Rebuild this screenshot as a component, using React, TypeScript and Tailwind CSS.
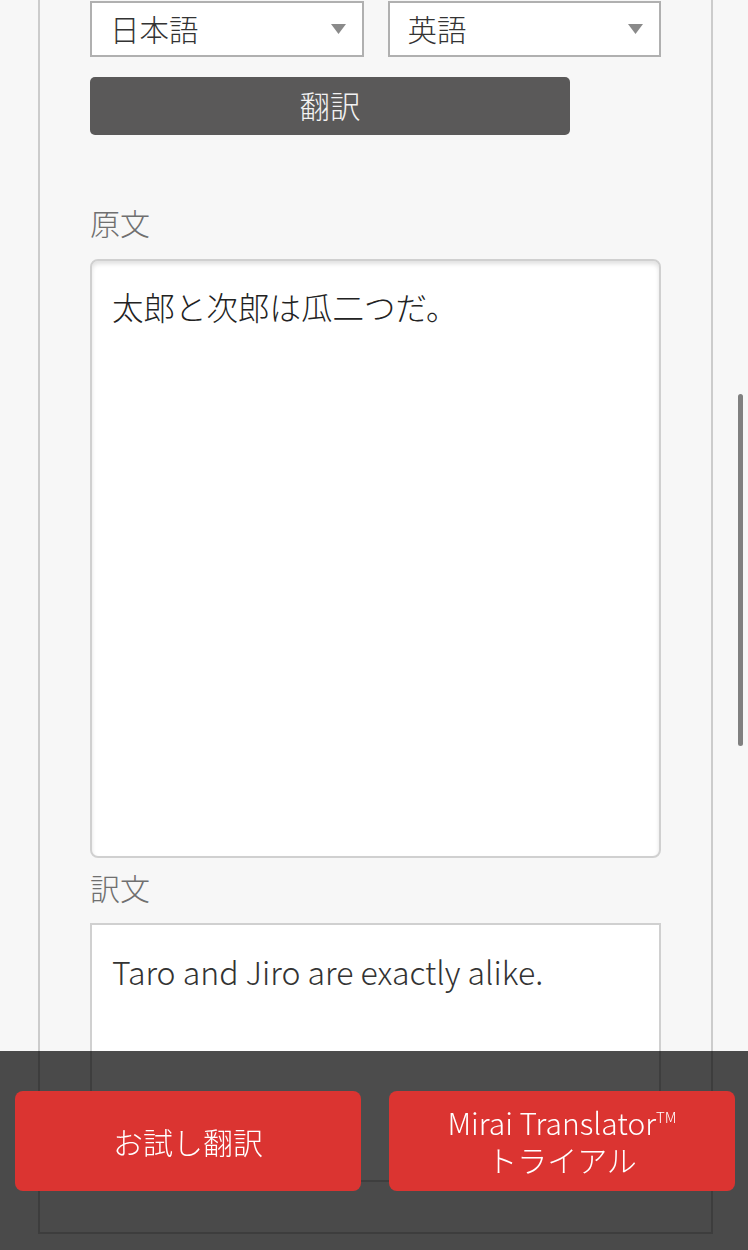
const font = "font-['Noto_Sans_CJK_JP_Light','Noto_Sans_CJK_JP_DemiLight','Noto_Sans_CJK_JP',sans-serif]";

function LangSelect({ label }: { label: string }) {
  return (
    <div className="flex h-[56px] flex-1 items-center justify-between border-2 border-[#b0b0b0] bg-white pl-[18px] pr-[16px]">
      <span className="text-[29.5px] font-light leading-none text-[#333]">{label}</span>
      <svg width="15" height="10" viewBox="0 0 15 10">
        <path d="M0 0h15L7.5 10z" fill="#8a8a8a" />
      </svg>
    </div>
  );
}

export default function App() {
  return (
    <div className={`min-h-screen bg-[#f7f7f7] pb-[16px] pl-[38px] pr-[35px] ${font}`}>
      <main className="flex flex-col border-x-2 border-b-2 border-[#cccccc] px-[50px] pb-[50px] pt-[1px]">
        <div className="flex gap-[24px]">
          <LangSelect label="日本語" />
          <LangSelect label="英語" />
        </div>

        <button className="mt-[20px] h-[58px] w-[480px] rounded-[5px] bg-[#5a5959] text-[30.5px] font-light text-[#f2f2f2]">
          翻訳
        </button>

        <h2 className="mt-[66px] text-[30px] font-light leading-[42px] text-[#6f6f6f]">原文</h2>
        <div className="mt-[16px] h-[599px] rounded-[8px] border-2 border-[#d0d0d0] bg-white px-[20px] pt-[23px] shadow-[inset_0_3px_4px_rgba(0,0,0,0.12)]">
          <p className="text-[31.5px] font-light leading-[44px] text-[#222]">太郎と次郎は瓜二つだ。</p>
        </div>

        <h2 className="mt-[8px] text-[30px] font-light leading-[42px] text-[#6f6f6f]">訳文</h2>
        <div className="mt-[15px] h-[259px] border-2 border-[#d0d0d0] bg-white px-[20px] pt-[23px]">
          <p className="text-[32px] font-light leading-[46px] text-[#333]">Taro and Jiro are exactly alike.</p>
        </div>
      </main>

      {/* scroll indicator */}
      <div className="fixed right-[5px] top-[394px] h-[352px] w-[5px] rounded-full bg-[#808080]" />

      <div className="fixed inset-x-0 bottom-0 grid h-[199px] grid-cols-2 gap-[28px] bg-black/70 pl-[15px] pr-[13px] pt-[40px]">
        <button className="flex h-[100px] items-center justify-center rounded-[8px] bg-[#db3431] text-[30px] font-light text-white">
          お試し翻訳
        </button>
        <button className="flex h-[100px] flex-col items-center justify-center rounded-[8px] bg-[#db3431] text-[30px] font-light leading-[37px] text-white">
          <span>
            Mirai Translator<sup className="relative -top-[12px] text-[15px] leading-none">TM</sup>
          </span>
          <span>トライアル</span>
        </button>
      </div>
    </div>
  );
}
